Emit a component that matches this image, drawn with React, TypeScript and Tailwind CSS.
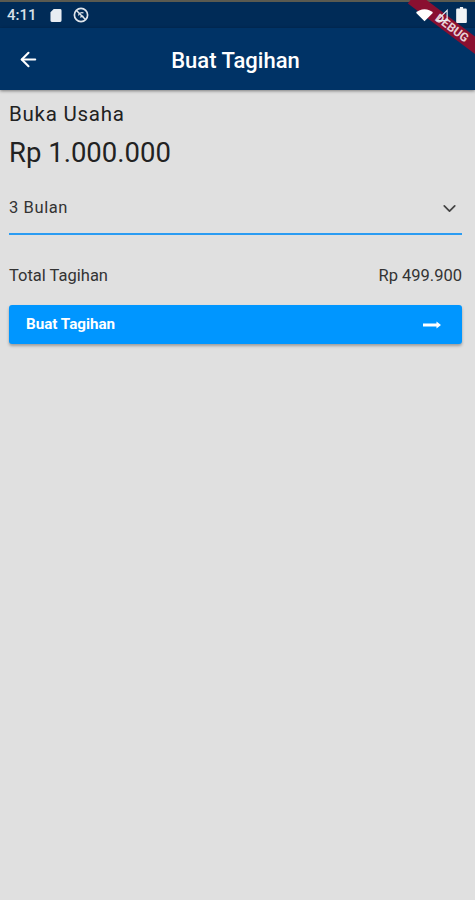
import React from 'react';
import { ArrowLeft, ChevronDown } from 'lucide-react';

const App: React.FC = () => {
  return (
    <div className="relative w-[475px] h-[900px] overflow-hidden bg-[#e0e0e0] font-['Roboto',sans-serif]">
      <div className="h-[2px] bg-[#5a5a50]" />
      {/* status bar */}
      <div className="h-[26px] bg-[#002b57] flex items-center justify-between pl-[7px] pr-[8px] text-[#d8e0e8]">
        <div className="flex items-center">
          <span className="text-[15px] font-medium w-[30px]">4:11</span>
          <svg width="12" height="15" viewBox="0 0 13 15" className="ml-[13px]">
            <path d="M4 0.5h7a1.5 1.5 0 0 1 1.5 1.5v11a1.5 1.5 0 0 1-1.5 1.5H2A1.5 1.5 0 0 1 .5 13V4z" fill="#e8edf2" />
          </svg>
          <svg width="16" height="16" viewBox="0 0 16 16" className="ml-[11px]" fill="none" stroke="#dfe5eb">
            <circle cx="8" cy="8" r="6.6" strokeWidth="1.7" />
            <path d="M3.5 3.5l9 9" strokeWidth="1.5" />
            <path d="M5.5 8.5a3.5 3.5 0 0 1 5-2.5M7.5 10.5a2 2 0 0 1 3-1" strokeWidth="1.3" />
          </svg>
        </div>
        <div className="relative z-20 flex items-center">
          <svg width="17" height="14" viewBox="0 0 19 14">
            <path d="M0 4.5C2.5 2 5.5 .5 9.5 .5s7 1.5 9.5 4L9.5 14z" fill="#ffffff" />
          </svg>
          <svg width="12" height="13" viewBox="0 0 14 14" className="ml-[3px]" fill="none">
            <path d="M13 1v12H1z" stroke="#e8edf2" strokeWidth="1.4" />
          </svg>
          <svg width="11" height="16" viewBox="0 0 10 15" className="ml-[8px]">
            <path d="M3.5 0h3v1.5H9a1 1 0 0 1 1 1V14a1 1 0 0 1-1 1H1a1 1 0 0 1-1-1V2.5a1 1 0 0 1 1-1h2.5z" fill="#f0f3f6" />
          </svg>
        </div>
      </div>

      {/* app bar */}
      <div className="relative h-[62px] bg-[#003366] flex items-center justify-center pt-[2px] pr-[4px] shadow-[0_1px_3px_rgba(0,0,0,0.45)]">
        <ArrowLeft className="absolute left-[17px] top-[20px] text-white" size={23} strokeWidth={2.2} />
        <span className="text-[22px] font-medium text-white">Buat Tagihan</span>
      </div>

      {/* form */}
      <div className="flex flex-col pl-[9px] pr-[13px] pt-[12px]">
        <p className="text-[20.5px] leading-[24px] text-[#222222] tracking-[0.75px]">Buka Usaha</p>
        <p className="mt-[11px] text-[27.5px] leading-[32px] text-[#222222]">Rp 1.000.000</p>

        <div className="mt-[16px] h-[50px] flex items-center justify-between border-b-2 border-[#2b9cf2] pb-[1px]">
          <span className="text-[16.5px] text-[#333333] tracking-[0.6px]">3 Bulan</span>
          <ChevronDown className="text-[#444444] mr-[2px]" size={21} strokeWidth={2} />
        </div>

        <div className="mt-[31px] flex items-center justify-between text-[16.5px] leading-[20px] text-[#333333]">
          <span>Total Tagihan</span>
          <span>Rp 499.900</span>
        </div>

        <button className="mt-[19px] h-[39px] rounded-[3px] bg-[#0096ff] flex items-center justify-between pl-[17px] pr-[21px] text-white shadow-[0_2px_3px_rgba(0,0,0,0.3)]">
          <span className="text-[15.2px] font-bold">Buat Tagihan</span>
          <svg width="18" height="10" viewBox="0 0 18 10">
            <path d="M0 3.6h13.5V1.5L18 5l-4.5 3.5V6.4H0z" fill="#ffffff" />
          </svg>
        </button>
      </div>

      {/* debug banner */}
      <div className="absolute z-10 top-[21px] left-[402px] w-[100px] h-[14px] bg-[#8a1030] rotate-[37deg] flex items-center justify-center">
        <span className="text-[12px] font-bold text-[#e8d0d6] leading-none">DEBUG</span>
      </div>
    </div>
  );
};

export default App;
